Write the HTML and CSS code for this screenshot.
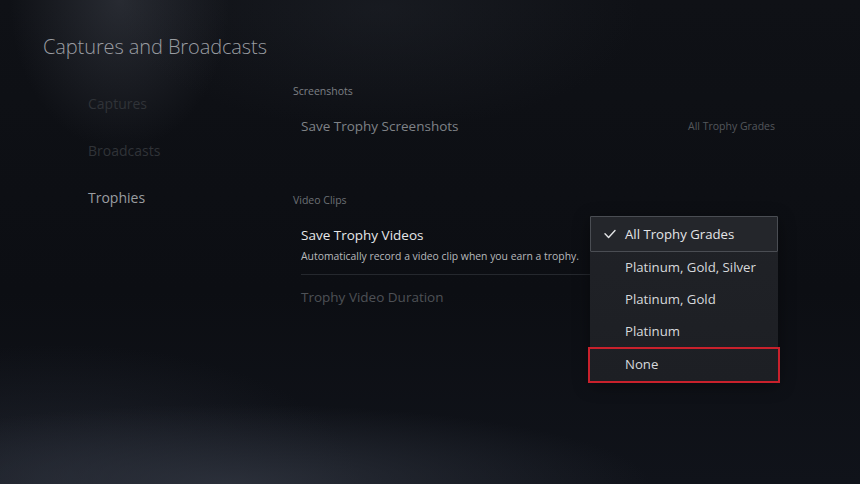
FILE: index.html
```html
<!DOCTYPE html>
<html lang="en">
<head>
<meta charset="utf-8">
<title>Captures and Broadcasts</title>
<link rel="stylesheet" href="styles.css">
</head>
<body>
<div class="screen">
  <h1 class="title">Captures and Broadcasts</h1>
  <div class="main">
    <nav class="nav">
      <div class="nav-item dim">Captures</div>
      <div class="nav-item dim">Broadcasts</div>
      <div class="nav-item active">Trophies</div>
    </nav>
    <div class="content">
      <div class="section-label shots">Screenshots</div>
      <div class="row row-single">
        <span class="row-title dimmed">Save Trophy Screenshots</span>
        <span class="row-value">All Trophy Grades</span>
      </div>
      <div class="section-label clips">Video Clips</div>
      <div class="row row-focus">
        <div class="row-title bright">Save Trophy Videos</div>
        <div class="row-desc">Automatically record a video clip when you earn a trophy.</div>
      </div>
      <div class="row row-last">
        <span class="row-title faded">Trophy Video Duration</span>
      </div>
    </div>
  </div>
  <div class="dropdown">
    <div class="option selected">
      <svg class="check" width="12" height="10" viewBox="0 0 12 10"><path d="M1 4.8 L4.6 8.4 L11 1.6" fill="none" stroke="#e4e5e7" stroke-width="1.4" stroke-linecap="round" stroke-linejoin="round"/></svg>
      <span>All Trophy Grades</span>
    </div>
    <div class="option">Platinum, Gold, Silver</div>
    <div class="option">Platinum, Gold</div>
    <div class="option">Platinum</div>
    <div class="option focused">None</div>
  </div>
</div>
</body>
</html>
```
FILE: styles.css
```css
html, body {
  margin: 0;
  padding: 0;
}
body {
  width: 860px;
  height: 484px;
  overflow: hidden;
  font-family: "Open Sans", "Noto Sans", sans-serif;
  background: #0d0f14;
}
.screen {
  position: relative;
  width: 860px;
  height: 484px;
  background:
    radial-gradient(ellipse 110px 150px at 120px 0px, rgba(70,74,84,0.45), rgba(70,74,84,0) 100%),
    radial-gradient(ellipse 260px 120px at 380px 10px, rgba(40,44,52,0.35), rgba(40,44,52,0) 100%),
    radial-gradient(ellipse 420px 80px at 230px 484px, rgba(48,53,64,0.8), rgba(48,53,64,0) 100%),
    radial-gradient(ellipse 300px 140px at 60px 484px, rgba(36,40,50,0.7), rgba(36,40,50,0) 100%),
    linear-gradient(180deg, #0f1116 0%, #0c0e13 60%, #10131a 100%);
}
.title {
  margin: 0;
  padding: 35px 0 0 43px;
  font-weight: 300;
  font-size: 20px;
  line-height: 24px;
  color: #9a9da2;
  letter-spacing: -0.1px;
}
.main {
  display: flex;
  padding-top: 16px;
}
.nav {
  width: 205px;
  padding-left: 88px;
  padding-top: 5px;
}
.nav-item {
  font-size: 14px;
  line-height: 47px;
  height: 47px;
}
.nav-item.dim { color: #303338; }
.nav-item.active { color: #9a9da1; }
.content {
  width: 485px;
}
.section-label {
  font-size: 10.5px;
  line-height: 16px;
  height: 16px;
}
.section-label.shots { margin-top: 8px; color: #7d8085; }
.section-label.clips { margin-top: 48px; color: #6c6f74; }
.row {
  margin-left: 8px;
}
.row-single {
  display: flex;
  justify-content: space-between;
  align-items: center;
  height: 36px;
  margin-top: 9px;
  padding-right: 3px;
}
.row-title {
  font-size: 13.5px;
  line-height: 20px;
}
.row-title.dimmed { color: #7f8287; }
.row-title.bright { color: #e6e7e9; }
.row-title.faded { color: #4e5156; }
.row-value {
  font-size: 10.5px;
  color: #54575c;
}
.row-focus {
  padding-top: 17px;
  padding-bottom: 10px;
  border-bottom: 1px solid #25282e;
}
.row-desc {
  margin-top: 3px;
  font-size: 10.4px;
  line-height: 16px;
  color: #b7b9bc;
}
.row-last {
  padding-top: 10px;
}
.dropdown {
  position: absolute;
  left: 590px;
  top: 216px;
  width: 188px;
  height: 165px;
  background: linear-gradient(180deg, #202227 0%, #1d1f24 100%);
  box-shadow: 0 4px 16px rgba(0,0,0,0.4);
}
.option {
  box-sizing: border-box;
  height: 32px;
  display: flex;
  align-items: center;
  padding-left: 35px;
  padding-bottom: 3px;
  font-size: 13.2px;
  color: #d7d9dc;
}
.option.selected {
  position: relative;
  height: 36px;
  padding-left: 34px;
  padding-bottom: 1px;
  border: 1px solid #4a4d53;
  background: #24262b;
  border-radius: 1px;
  color: #e4e5e7;
}
.check {
  position: absolute;
  left: 13px;
  top: 12px;
}
.option.focused {
  margin: -1px -2px 0;
  padding-left: 35px;
  padding-bottom: 2px;
  height: 36px;
  border: 2px solid #c9212c;
}
```
